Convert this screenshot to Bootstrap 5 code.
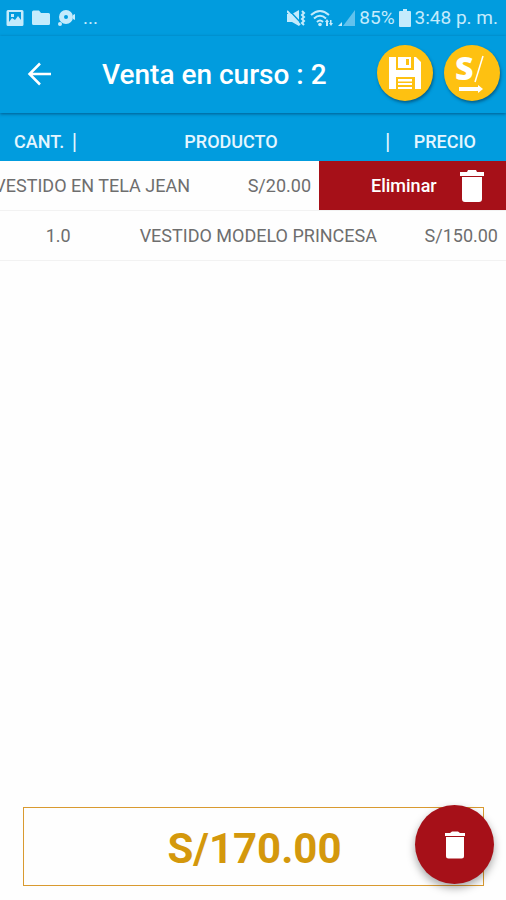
<!DOCTYPE html>
<html lang="es">
<head>
<meta charset="utf-8">
<meta name="viewport" content="width=device-width, initial-scale=1">
<title>Venta en curso</title>
<link rel="stylesheet" href="https://cdn.jsdelivr.net/npm/bootstrap@5.3.0/dist/css/bootstrap.min.css">
<style>
  body { font-family: Roboto, sans-serif; background: #fefefe; }
  .bg-sky { background: #019cde; }
  .status { height: 36px; padding: 0 8px 0 6px; color: #c4ebfc; font-size: 19px; line-height: 24px; }
  .topbar { height: 77px; padding: 0 6px 4px 24px; box-shadow: 0 1px 3px rgba(0, 50, 90, .6); z-index: 1; }
  .topbar h1 { font-size: 28px; line-height: 32px; font-weight: 500; padding: 4px 0 0 46px; }
  .round-actions { gap: 11px; }
  .btn-round { width: 56px; height: 56px; background: #fec111; box-shadow: 1px 2px 3px rgba(0, 40, 70, .5); }
  .btn-round svg { overflow: visible; }
  .sales th, .sales td { height: 100%; }
  .sales tr { font-size: 18px; line-height: 24px; }
  .sales thead tr { height: 48px; padding-top: 9px; color: #e4f6ff; }
  .sales thead th { font-weight: 500; }
  .sales tbody tr { height: 50px; color: #6e6e6e; border-bottom: 1px solid #f2f2f2; }
  .sales tbody td { padding-top: 2px; }
  .sales .divider { font-size: 22px; font-weight: 400; }
  .col-qty { width: 23%; }
  .sales thead .col-qty { width: 78px; padding-left: 14px; }
  .sales thead .col-price { width: 122px; padding-right: 30px; }
  .col-price { width: 128px; padding-right: 8px; }
  .btn-del { width: 187px; padding: 0 20px 0 52px; background: #a61018; font-size: 18px; font-weight: 500; }
  .footer-total { padding: 0 22px 14px 23px; }
  .total { height: 79px; border: 1px solid #d99a30; color: #d4980c; font-size: 42px; line-height: 48px; font-weight: 700; padding: 5px 0 0 2px; }
  .btn-fab { width: 79px; height: 79px; right: 12px; bottom: 16px; background: #a61018; box-shadow: 0 4px 8px rgba(0, 0, 0, .35); }
</style>
<script src="https://cdn.jsdelivr.net/npm/bootstrap@5.3.0/dist/js/bootstrap.bundle.min.js"></script>
</head>
<body>
<div class="d-flex flex-column min-vh-100 overflow-hidden">
  <div class="status bg-sky d-flex align-items-center justify-content-between">
    <div class="d-flex align-items-center gap-2">
      <svg width="18" height="18" viewBox="0 0 18 18" aria-hidden="true"><path fill="#c4ebfc" fill-rule="evenodd" d="M2 1h14q1.500 0 1.500 1.500v13q0 1.500-1.500 1.500H2Q.5 17 .5 15.500v-13Q.5 1 2 1zm1 2v10l3-4 3 2 3-4 3 4V3zM5 5h3v3H5z"/></svg>
      <svg width="18" height="18" viewBox="0 0 18 18" aria-hidden="true"><path fill="#c4ebfc" d="M0 3q0-1.500 1.500-1.500H7L9 4h7.500Q18 4 18 5.500v9q0 1.500-1.500 1.500h-15Q0 16 0 14.500z"/></svg>
      <svg width="17" height="18" viewBox="0 0 17 18" aria-hidden="true"><path fill="#c4ebfc" fill-rule="evenodd" d="M8 1a7 7 0 1 1 0 14 7 7 0 0 1 0-14zm0 5a2 2 0 1 0 0 4 2 2 0 0 0 0-4z"/><circle cx="2" cy="15" r="2" fill="#c4ebfc"/><path fill="#c4ebfc" d="M15 6l2-1v6l-2-1z"/></svg>
      <span>...</span>
    </div>
    <div class="d-flex align-items-center gap-1">
      <svg width="19" height="18" viewBox="0 0 19 18" aria-hidden="true"><path fill="#c4ebfc" d="M0 5h5l7-4v16l-7-4H0z"/><path stroke="#019cde" stroke-width="1.500" d="M1 0l13 14"/><path stroke="#c4ebfc" stroke-width="2" fill="none" d="M0 2l13 14M15 2l2 2-2 2 2 2-2 2 2 2-2 2 2 2"/></svg>
      <svg width="24" height="19" viewBox="0 0 24 19" aria-hidden="true"><path fill="none" stroke="#c4ebfc" stroke-width="2" d="M1 6q9-8 18 0M4 9.500q6-5.500 12 0M7 13q3-3 6 0"/><circle cx="10" cy="15.500" r="1.800" fill="#c4ebfc"/><path fill="#c4ebfc" d="M15 13l2-3 2 3h-1v4h-2v-4zM19 14h1v-3h1.500v3h1.500l-2 3z"/></svg>
      <svg width="17" height="18" viewBox="0 0 17 18" aria-hidden="true"><path fill="#62c2ed" d="M17 1v16H5z"/><path fill="#c4ebfc" d="M0 17l4-4v4z"/></svg>
      <span>85%</span>
      <svg width="12" height="18" viewBox="0 0 12 18" aria-hidden="true"><path fill="#c4ebfc" d="M4 0h4v2h3q1 0 1 1v14q0 1-1 1H1q-1 0-1-1V3q0-1 1-1h3z"/></svg>
      <span>3:48 p. m.</span>
    </div>
  </div>

  <header class="topbar bg-sky d-flex align-items-center position-relative text-white">
    <button type="button" class="btn p-0 border-0 text-white d-flex" aria-label="Volver">
      <svg width="32" height="32" viewBox="0 0 32 32" fill="none" stroke="#fff" stroke-width="2.500" aria-hidden="true"><path d="M27 17H6M16 6.500L5.500 17 16 27.500"/></svg>
    </button>
    <h1 class="mb-0 flex-grow-1 text-nowrap">Venta en curso : 2</h1>
    <div class="round-actions d-flex">
      <button type="button" class="btn btn-round rounded-circle border-0 p-0 d-flex align-items-center justify-content-center" aria-label="Guardar">
        <svg width="34" height="34" viewBox="0 0 34 34" aria-hidden="true"><path fill="#fff" d="M1 1h7v13h18V1h2l5 5v27h-6V21H8v12H1zM10 1h13v11H10zM18 3v6h3V3zM10 23h14v2.500H10zM10 27h14v2H10zM10 31h14v2H10z" fill-rule="evenodd"/></svg>
      </button>
      <button type="button" class="btn btn-round rounded-circle border-0 p-0 d-flex align-items-center justify-content-center" aria-label="Cobrar">
        <svg width="40" height="44" viewBox="0 0 40 44" aria-hidden="true"><text x="3" y="29" font-family="Open Sans, sans-serif" font-size="32" font-weight="800" fill="#fff">S</text><path stroke="#fff" stroke-width="1.500" d="M23 31L31 5"/><path fill="#fff" d="M7 36h19v-2l5 4-5 4v-2H7z"/></svg>
      </button>
    </div>
  </header>

  <main class="flex-grow-1 d-flex flex-column">
    <table class="sales d-block w-100 mb-auto">
      <thead class="d-block bg-sky">
        <tr class="d-flex w-100 align-items-center">
          <th scope="col" class="col-qty d-flex align-items-center justify-content-between"><span>CANT.</span><span class="divider">|</span></th>
          <th scope="col" class="flex-grow-1 d-flex align-items-center justify-content-center">PRODUCTO</th>
          <th scope="col" class="col-price d-flex align-items-center justify-content-between"><span class="divider">|</span><span>PRECIO</span></th>
        </tr>
      </thead>
      <tbody class="d-block">
        <tr class="d-flex w-100 justify-content-end overflow-hidden">
          <td class="flex-grow-1 flex-shrink-0 d-flex align-items-center justify-content-end text-nowrap">VESTIDO EN TELA JEAN</td>
          <td class="col-price flex-shrink-0 d-flex align-items-center justify-content-end">S/20.00</td>
          <td class="flex-shrink-0 d-flex p-0">
            <button type="button" class="btn btn-del rounded-0 border-0 text-white d-flex align-items-center justify-content-between">Eliminar
              <svg width="28" height="34" viewBox="0 0 28 34" fill="#fff" aria-hidden="true"><path d="M2 3h7l1-2h8l1 2h7v4H2zM4 8h20v22q0 3-3 3H7q-3 0-3-3z"/></svg>
            </button>
          </td>
        </tr>
        <tr class="d-flex w-100">
          <td class="col-qty d-flex align-items-center justify-content-center">1.0</td>
          <td class="flex-grow-1 d-flex align-items-center justify-content-end text-nowrap">VESTIDO MODELO PRINCESA</td>
          <td class="col-price d-flex align-items-center justify-content-end">S/150.00</td>
        </tr>
      </tbody>
    </table>
  </main>

  <footer class="footer-total position-relative">
    <div class="total d-flex align-items-center justify-content-center">S/170.00</div>
    <button type="button" class="btn btn-fab position-absolute rounded-circle border-0 p-0 d-flex align-items-center justify-content-center" aria-label="Eliminar venta">
      <svg width="22" height="28" viewBox="0 0 22 28" fill="#fff" aria-hidden="true"><path d="M1 2h5l2-1.500h6L16 2h5v3H1zM2 6h18v19q0 2.500-2.500 2.500h-13Q2 27.500 2 25z"/></svg>
    </button>
  </footer>
</div>
</body>
</html>
